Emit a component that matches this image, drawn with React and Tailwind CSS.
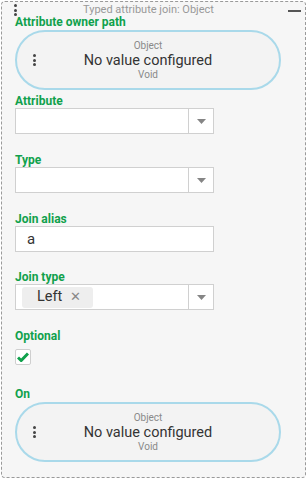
import React from "react";

const font = { fontFamily: "Roboto, 'Liberation Sans', sans-serif" };

function Dots({ className }) {
  return (
    <div className={"flex flex-col items-center gap-[1.5px] " + className}>
      <span className="w-[3px] h-[3px] rounded-full bg-[#444]" />
      <span className="w-[3px] h-[3px] rounded-full bg-[#444]" />
      <span className="w-[3px] h-[3px] rounded-full bg-[#444]" />
    </div>
  );
}

function Label({ children, className = "" }) {
  return (
    <div className={"text-[12px] leading-[14px] font-bold text-[#10a14c] " + className}>
      {children}
    </div>
  );
}

function Pill() {
  return (
    <div className="relative w-[266px] h-[60px] rounded-full border-2 border-[#a9d9ea] bg-[#f3f3f3] flex flex-col items-center justify-center">
      <Dots className="absolute left-[16px] top-[22px]" />
      <div className="text-[10px] leading-[12px] text-[#8a8a8a]">Object</div>
      <div className="text-[14.5px] leading-[17px] text-[#333]">No value configured</div>
      <div className="text-[10px] leading-[12px] text-[#8a8a8a]">Void</div>
    </div>
  );
}

function Arrow() {
  return (
    <div className="w-[25px] h-full flex items-center justify-center border-l border-[#d0d0d0]">
      <svg width="9" height="5" viewBox="0 0 9 5">
        <path d="M0 0 H9 L4.5 5 Z" fill="#858585" />
      </svg>
    </div>
  );
}

function Select({ children }) {
  return (
    <div className="w-[199px] h-[26px] border border-[#d0d0d0] bg-white flex">
      <div className="flex-1 flex items-center px-[6px]">{children}</div>
      <Arrow />
    </div>
  );
}

export default function App() {
  return (
    <div className="w-[308px] h-[478px] bg-white" style={font}>
      <div className="ml-[1px] mt-[1px] w-[305px] h-[477px] border border-dashed border-[#9a9a9a] rounded-[4px] bg-[#f6f6f6] pl-[13px]">
        <div className="relative h-[13px]">
          <Dots className="absolute left-[-1px] top-[2px]" />
          <div className="absolute left-[68px] top-[0px] text-[11px] leading-[15px] text-[#999]">
            Typed attribute join: Object
          </div>
          <div className="absolute left-[273px] top-[8px] w-[13px] h-[2px] bg-[#555]" />
        </div>
        <Label>Attribute owner path</Label>
        <div className="mt-[1px]">
          <Pill />
        </div>
        <Label className="mt-[4px]">Attribute</Label>
        <Select />
        <Label className="mt-[19px]">Type</Label>
        <Select />
        <Label className="mt-[19px]">Join alias</Label>
        <div className="w-[199px] h-[26px] border border-[#d0d0d0] bg-white flex items-center px-[11px] text-[15px] text-[#333]">
          a
        </div>
        <Label className="mt-[18px]">Join type</Label>
        <div className="w-[199px] h-[26px] border border-[#d0d0d0] bg-white flex">
          <div className="flex-1 flex items-center pl-[6px]">
            <div className="h-[21px] w-[71px] rounded-[3px] bg-[#eeeeee] flex items-center pl-[15px] gap-[8px]">
              <span className="text-[14.5px] text-[#333]">Left</span>
              <span className="text-[13px] text-[#888]">✕</span>
            </div>
          </div>
          <Arrow />
        </div>
        <Label className="mt-[19px]">Optional</Label>
        <div className="mt-[6px] w-[16px] h-[16px] border border-[#cfcfcf] rounded-[2px] bg-white flex items-center justify-center">
          <svg width="12" height="10" viewBox="0 0 12 10">
            <path d="M1 5.5 L4.2 8.5 L11 1.5" fill="none" stroke="#10a14c" strokeWidth="3" />
          </svg>
        </div>
        <Label className="mt-[22px]">On</Label>
        <div className="mt-[1px]">
          <Pill />
        </div>
      </div>
    </div>
  );
}
